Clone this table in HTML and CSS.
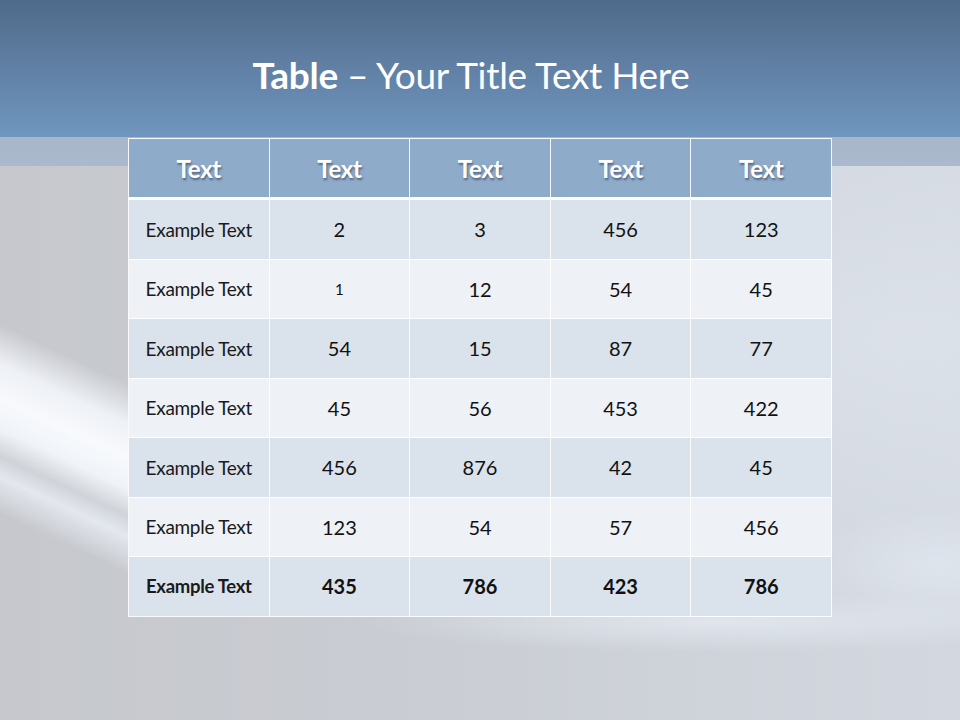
FILE: index.html
```html
<!DOCTYPE html>
<html>
<head>
<meta charset="utf-8">
<link rel="stylesheet" href="styles.css">
</head>
<body>
<div class="slide">
  <header class="band">
    <h1 class="title"><b>Table</b> – Your Title Text Here</h1>
  </header>
  <main class="content">
    <table class="data">
      <thead>
        <tr><th>Text</th><th>Text</th><th>Text</th><th>Text</th><th>Text</th></tr>
      </thead>
      <tbody>
        <tr class="dark"><td class="label">Example Text</td><td>2</td><td>3</td><td>456</td><td>123</td></tr>
        <tr class="light"><td class="label">Example Text</td><td class="small">1</td><td>12</td><td>54</td><td>45</td></tr>
        <tr class="dark"><td class="label">Example Text</td><td>54</td><td>15</td><td>87</td><td>77</td></tr>
        <tr class="light"><td class="label">Example Text</td><td>45</td><td>56</td><td>453</td><td>422</td></tr>
        <tr class="dark"><td class="label">Example Text</td><td>456</td><td>876</td><td>42</td><td>45</td></tr>
        <tr class="light"><td class="label">Example Text</td><td>123</td><td>54</td><td>57</td><td>456</td></tr>
        <tr class="dark total"><td class="label">Example Text</td><td>435</td><td>786</td><td>423</td><td>786</td></tr>
      </tbody>
    </table>
  </main>
</div>
</body>
</html>
```

FILE: styles.css
```css
html, body {
  margin: 0;
  padding: 0;
}
body {
  width: 960px;
  height: 720px;
  overflow: hidden;
  font-family: "Lato", "Open Sans", sans-serif;
}
.slide {
  width: 960px;
  height: 720px;
  display: flex;
  flex-direction: column;
}
.band {
  height: 137px;
  flex: none;
  background: linear-gradient(180deg, #4f6a8a 0%, #5f7ea2 45%, #7096bf 100%);
  display: flex;
  justify-content: center;
  align-items: flex-start;
}
.title {
  margin: 52px 0 0 -18px;
  font-size: 37px;
  font-weight: 400;
  color: #ffffff;
  line-height: 46px;
  letter-spacing: -0.3px;
}
.title b {
  font-weight: 700;
}
.content {
  flex: 1;
  padding-top: 1px;
  display: flex;
  justify-content: center;
  align-items: flex-start;
  background:
    linear-gradient(180deg, #a8b6c9 0px, #aab9cd 29px, rgba(0,0,0,0) 29px),
    linear-gradient(205deg, rgba(250,252,255,0) 24%, rgba(248,251,255,0.8) 36%, rgba(250,252,255,0.95) 46%, rgba(244,248,253,0.9) 55%, rgba(235,241,248,0.25) 63%, rgba(240,245,252,0.7) 69%, rgba(240,245,252,0) 80%) 0 165px / 128px 280px no-repeat,
    radial-gradient(ellipse 360px 30px at 720px 485px, rgba(232,238,246,0.7), rgba(232,238,246,0) 100%),
    radial-gradient(ellipse 140px 60px at 940px 430px, rgba(225,231,240,0.8), rgba(225,231,240,0) 100%),
    radial-gradient(ellipse 500px 300px at 900px 200px, rgba(222,228,236,0.8), rgba(222,228,236,0) 100%),
    linear-gradient(90deg, #c6c8cd 0%, #c9ccd2 40%, #d3d8e0 100%);
}
.data {
  width: 704px;
  border-collapse: collapse;
  table-layout: fixed;
  border: 1px solid rgba(255,255,255,0.85);
}
.data th,
.data td {
  border: 1px solid rgba(255,255,255,0.9);
  text-align: center;
  vertical-align: middle;
  padding: 0;
}
.data th {
  height: 58px;
  background: #8eabca;
  color: #ffffff;
  font-size: 24px;
  font-weight: 700;
  letter-spacing: -0.3px;
  text-shadow: 1px 2px 2px rgba(40,50,70,0.55);
  border-bottom: 3px solid #ffffff;
}
.data td {
  height: 58.5px;
  font-size: 20px;
  color: #111111;
}
.data tr.dark td {
  background: #dae2eb;
}
.data tr.light td {
  background: #eef1f6;
}
.data td.label {
  font-size: 19px;
  letter-spacing: -0.3px;
  color: #1a1a1a;
}
.data td.small {
  font-size: 15px;
}
.data tr.total td {
  font-weight: 700;
}
.data tr.total td.label {
  font-size: 18.5px;
}
```
